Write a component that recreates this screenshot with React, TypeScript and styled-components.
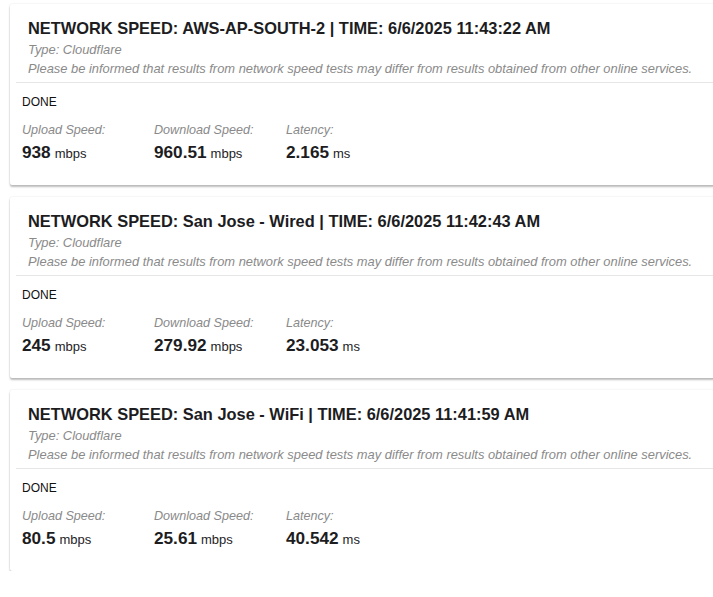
import React from 'react';
import styled, { createGlobalStyle } from 'styled-components';

const GlobalStyle = createGlobalStyle`
	html, body {
		margin: 0;
		padding: 0;
		background: #fff;
		overflow: hidden;
	}
	body {
		font-family: 'Liberation Sans', Arial, sans-serif;
		color: #1d1d1f;
	}
`;

const Page = styled.div`
	width: 740px;
	padding: 4px 0 0 10px;
	display: flex;
	flex-direction: column;
	gap: 12px;
`;

const Card = styled.div`
	height: 181px;
	box-sizing: border-box;
	background: #fff;
	box-shadow: 0 2px 2px rgba(0, 0, 0, 0.25), 0 0 2px rgba(0, 0, 0, 0.12);
	border-radius: 2px;
`;

const Header = styled.div`
	margin-left: 6px;
	padding: 12px 18px 4px 12px;
	border-bottom: 1px solid #e6e6e6;
`;

const Title = styled.div`
	font-size: 16.4px;
	font-weight: 700;
	line-height: 24px;
	color: #1d1d1f;
`;

const Note = styled.div`
	font-size: 12.9px;
	font-style: italic;
	line-height: 19px;
	color: #8a8a8a;
	white-space: nowrap;
`;

const Body = styled.div`
	padding: 10px 12px 0;
`;

const Status = styled.div`
	font-size: 12px;
	line-height: 18px;
	color: #111;
`;

const Stats = styled.div`
	display: grid;
	grid-template-columns: repeat(3, 132px);
	margin-top: 10px;
`;

const Label = styled.div`
	font-size: 12.6px;
	font-style: italic;
	line-height: 18px;
	color: #8a8a8a;
`;

const Value = styled.div`
	margin-top: 2px;
	font-size: 17.2px;
	font-weight: 700;
	line-height: 22px;
	color: #1d1d1f;
`;

const Unit = styled.span`
	font-size: 13px;
	font-weight: 400;
	margin-left: 4px;
`;

interface SpeedResult {
	server: string;
	time: string;
	upload: string;
	download: string;
	latency: string;
}

const results: SpeedResult[] = [
	{ server: 'AWS-AP-SOUTH-2', time: '6/6/2025 11:43:22 AM', upload: '938', download: '960.51', latency: '2.165' },
	{ server: 'San Jose - Wired', time: '6/6/2025 11:42:43 AM', upload: '245', download: '279.92', latency: '23.053' },
	{ server: 'San Jose - WiFi', time: '6/6/2025 11:41:59 AM', upload: '80.5', download: '25.61', latency: '40.542' },
];

const SpeedCard: React.FC<{ result: SpeedResult }> = ({ result }) => (
	<Card>
		<Header>
			<Title>
				NETWORK SPEED: {result.server} | TIME: {result.time}
			</Title>
			<Note>Type: Cloudflare</Note>
			<Note>
				Please be informed that results from network speed tests may differ from results obtained from other online
				services.
			</Note>
		</Header>
		<Body>
			<Status>DONE</Status>
			<Stats>
				<div>
					<Label>Upload Speed:</Label>
					<Value>
						{result.upload}
						<Unit>mbps</Unit>
					</Value>
				</div>
				<div>
					<Label>Download Speed:</Label>
					<Value>
						{result.download}
						<Unit>mbps</Unit>
					</Value>
				</div>
				<div>
					<Label>Latency:</Label>
					<Value>
						{result.latency}
						<Unit>ms</Unit>
					</Value>
				</div>
			</Stats>
		</Body>
	</Card>
);

export default function App() {
	return (
		<>
			<GlobalStyle />
			<Page>
				{results.map((r) => (
					<SpeedCard key={r.time} result={r} />
				))}
			</Page>
		</>
	);
}
